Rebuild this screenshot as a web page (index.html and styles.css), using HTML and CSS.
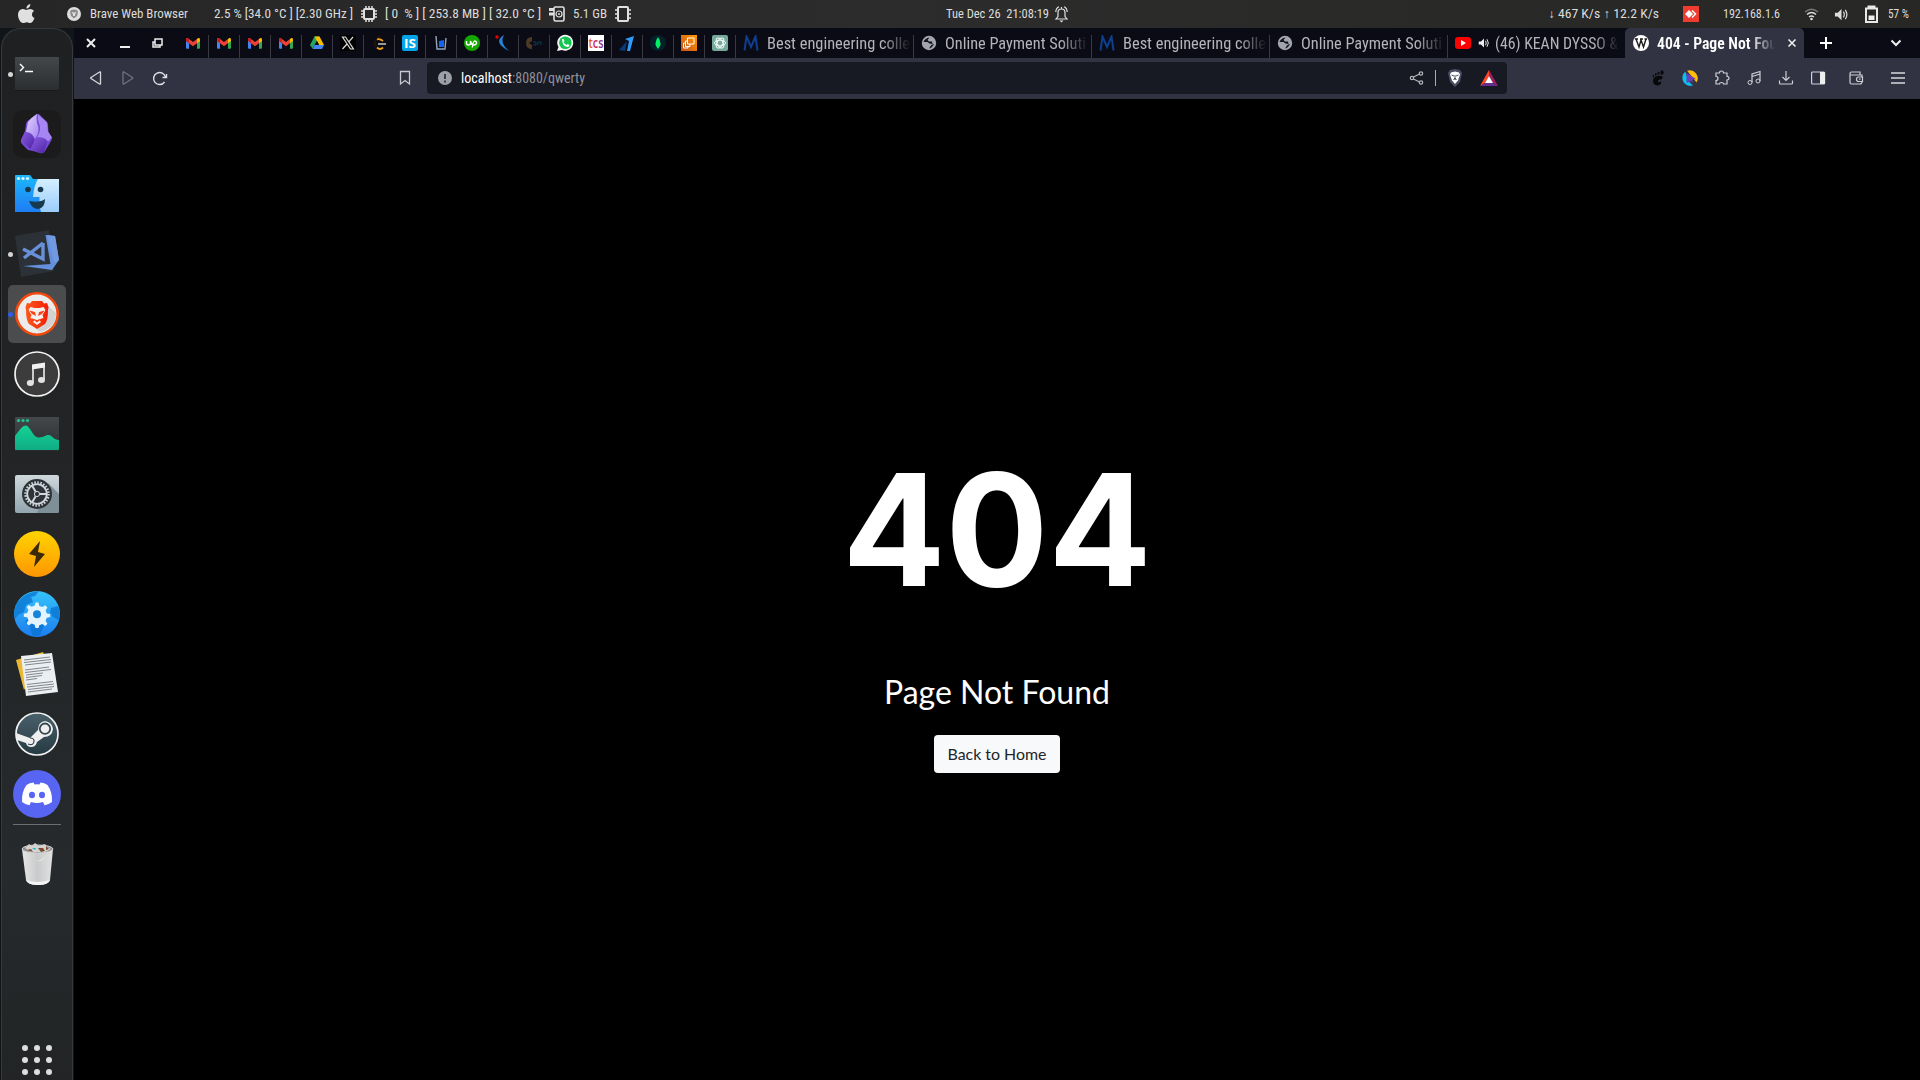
FILE: index.html
```html
<!DOCTYPE html>
<html lang="en">
<head>
<meta charset="utf-8">
<title>404 - Page Not Found</title>
<link rel="stylesheet" href="styles.css">
</head>
<body>
<svg class="defs" width="0" height="0">
  <defs>
    <linearGradient id="gTerm" x2="0" y2="1"><stop stop-color="#44484b"/><stop offset="1" stop-color="#2b2e30"/></linearGradient>
    <linearGradient id="gFold" x2="0" y2="1"><stop stop-color="#1cb8fb"/><stop offset="1" stop-color="#1f7cf4"/></linearGradient>
    <linearGradient id="gFold2" x2="0" y2="1"><stop stop-color="#d4efff"/><stop offset="1" stop-color="#9accfb"/></linearGradient>
    <linearGradient id="gObs" x2="1" y2="1"><stop stop-color="#e4d6ff"/><stop offset="1" stop-color="#a283ee"/></linearGradient>
    <linearGradient id="gObs2" x2="1" y2="1"><stop stop-color="#8c5ee0"/><stop offset="1" stop-color="#4b21a4"/></linearGradient>
    <linearGradient id="gLion" x2="1" y2="0"><stop stop-color="#fb5a1c"/><stop offset="1" stop-color="#f51c05"/></linearGradient>
    <linearGradient id="gMon" x2="0" y2="1"><stop stop-color="#14d295"/><stop offset="1" stop-color="#10ac84"/></linearGradient>
    <linearGradient id="gSet" x2="0" y2="1"><stop stop-color="#cfd8dc"/><stop offset="1" stop-color="#93a5ae"/></linearGradient>
    <linearGradient id="gBolt" x2="0" y2="1"><stop stop-color="#ffd400"/><stop offset="1" stop-color="#ff9603"/></linearGradient>
    <linearGradient id="gGlobe" x2="0" y2="1"><stop stop-color="#35c4fa"/><stop offset="1" stop-color="#1c7df0"/></linearGradient>
    <linearGradient id="gSteam" x2="0" y2="1"><stop stop-color="#4a606b"/><stop offset="1" stop-color="#263a42"/></linearGradient>
    <linearGradient id="gBin" x2="1" y2="0"><stop stop-color="#e6e6e6"/><stop offset=".5" stop-color="#c9cacb"/><stop offset="1" stop-color="#e2e2e2"/></linearGradient>
    <linearGradient id="gAws" x1="0" y1="1" x2="1" y2="0"><stop stop-color="#c8511b"/><stop offset="1" stop-color="#f90"/></linearGradient>
  </defs>
  <symbol id="gmail" viewBox="0 0 16 16"><path d="M1 4.500v8.300q0 1 1 1h2V7.500z" fill="#4285f4"/><path d="M15 4.500v8.300q0 1-1 1h-2V7.500z" fill="#34a853"/><path d="M12 4l1.200-.9Q15 2.400 15 4.500V6l-3 2.300z" fill="#fbbc04"/><path d="M1 4.500q0-2 2-1.300L8 7l4-3v4.300L8 11.300 1 6z" fill="#ea4335"/><path d="M1 4.500V6l3 2.300V4q-3-2.300-3 .5z" fill="#c5221f"/></symbol>
  <symbol id="mesa" viewBox="0 0 16 16"><path d="M1.500 15.500L3.500 1.500 8 12 12.500 1.500 14.500 15.500" fill="none" stroke="#0c3f90" stroke-width="2"/></symbol>
  <symbol id="globe" viewBox="0 0 16 16"><circle cx="8" cy="8" r="7.200" fill="#a2a4ae"/><path d="M2.500 7Q4 3 8.500 2.500L6.500 5 8 6.500h3l.5 2.500-3-.5-2-1.500zM8 13.500q3-.5 5-4.500-2 0-3 1.500z" fill="#12121c"/></symbol>
  <symbol id="chip" viewBox="0 0 16 16"><path d="M5 0v16M8 0v16M11 0v16M0 5h16M0 8h16M0 11h16" stroke="#e0e0e0" stroke-width="1.500"/><rect x="3" y="3" width="10" height="10" rx="1" fill="#282828" stroke="#e0e0e0" stroke-width="2"/></symbol>
  <symbol id="speaker" viewBox="0 0 16 16"><path d="M1 6h3l4-4v12l-4-4H1z" fill="currentColor"/><path d="M10 5q2 3 0 6M12 3q3.500 5 0 10" fill="none" stroke="currentColor" stroke-width="1.300"/></symbol>
</svg>

<header class="topbar">
  <svg width="17" height="20" viewBox="0 0 17 20"><path d="M12 5c2 0 3.500 1 4 2-3 2-2.500 6 .5 7-.8 2.500-2.500 5-4 5-1.600 0-2-.8-3.700-.8S6.500 19 5 19C2.500 19 0 14.500 0 11c0-4 2.500-6 5-6 1.500 0 2.600.9 3.500.9S10.500 5 12 5zM8.500 4.500C8.300 2 10.500.2 12.300 0c.2 2.400-1.800 4.500-3.800 4.500z" fill="#e0e0e0"/></svg>
  <svg width="16" height="16" viewBox="0 0 16 16"><circle cx="8" cy="8" r="7" fill="#dedede"/><path d="M8 3.500l3 .5 1 2-1 4-3 2.500L5 10 4 6l1-2z" fill="#8a8a8a"/><path d="M5.500 6L8 6.500 10.500 6 9 8.500V10H7V8.500z" fill="#ddd"/></svg>
  <svg class="t" width="99" height="28"><text x="0" y="18" textLength="98" lengthAdjust="spacingAndGlyphs">Brave Web Browser</text></svg>
  <svg class="t" width="140" height="28"><text x="0" y="18" textLength="139" lengthAdjust="spacingAndGlyphs">2.5 % [34.0 °C ] [2.30 GHz ]</text></svg>
  <svg width="16" height="16"><use href="#chip"/></svg>
  <svg class="t" width="157" height="28"><text x="0" y="18" textLength="156" lengthAdjust="spacingAndGlyphs">[ 0&#160; % ] [ 253.8 MB ] [ 32.0 °C ]</text></svg>
  <svg width="16" height="16" viewBox="0 0 16 16"><rect x="5" y="1" width="10" height="14" rx="1.500" fill="#282828" stroke="#e0e0e0" stroke-width="1.600"/><path d="M0 2h5v3H0zM0 6.500h5v3H0z" fill="#e0e0e0"/><circle cx="10" cy="8" r="3" fill="none" stroke="#e0e0e0" stroke-width="1.200"/><circle cx="10" cy="8" r="1" fill="#e0e0e0"/></svg>
  <svg class="t" width="35" height="28"><text x="0" y="18" textLength="34" lengthAdjust="spacingAndGlyphs">5.1 GB</text></svg>
  <svg width="16" height="16" viewBox="0 0 16 16"><path d="M0 4h16M0 8h16M0 12h16" stroke="#e0e0e0" stroke-width="1.500"/><rect x="3" y="1" width="10" height="14" rx="1" fill="#282828" stroke="#e0e0e0" stroke-width="2"/></svg>
  <svg class="t" width="104" height="28"><text x="0" y="18" textLength="103" lengthAdjust="spacingAndGlyphs">Tue Dec 26&#160; 21:08:19</text></svg>
  <svg width="13" height="17" viewBox="0 0 13 17"><path d="M1 13h11L10 10.500V6.500Q10 3 6.500 3T3 6.500v4zM.8 6Q1 2 4 .8M12.200 6Q12 2 9 .8M6.500 1v2" fill="none" stroke="#e0e0e0" stroke-width="1.200"/><path d="M4.500 14.500h4l-2 2z" fill="#e0e0e0"/></svg>
  <svg class="t" width="112" height="28"><text x="-1" y="18" textLength="111" lengthAdjust="spacingAndGlyphs">↓ 467 K/s ↑ 12.2 K/s</text></svg>
  <svg width="16" height="16" viewBox="0 0 16 16"><path d="M0 0h16v16H0z" fill="#f03c30"/><path d="M6 4l4 4-4 4-4-4z" fill="#fff"/><path d="M9 4.500L12.500 8 9 11.500" fill="none" stroke="#fff" stroke-width="1.500"/></svg>
  <svg class="t" width="57" height="28"><text x="0" y="18" textLength="57" lengthAdjust="spacingAndGlyphs">192.168.1.6</text></svg>
  <svg width="15" height="14" viewBox="0 0 15 14"><g fill="none" stroke-width="1.400"><path d="M1 5Q7.500-.5 14 5" stroke="#777"/><path d="M3 7.500q4.500-4 9 0M5 10q2.500-2 5 0" stroke="#ddd"/></g><circle cx="7.500" cy="12" r="1.300" fill="#ddd"/></svg>
  <svg class="light" width="15" height="15"><use href="#speaker"/></svg>
  <svg width="15" height="17" viewBox="0 0 15 17"><path d="M4.500 2V.5h6V2M2 2.500h11V16H2z" fill="none" stroke="#e8e8e8" stroke-width="2"/><path d="M4.500 9.500h6v4.500h-6z" fill="#eee"/></svg>
  <svg class="t" width="22" height="28"><text x="0" y="18" textLength="21" lengthAdjust="spacingAndGlyphs">57 %</text></svg>
</header>

<div class="desktop">
  <nav class="dock">
    <div class="app"><i class="run"></i><svg width="48" height="48"><rect x="2" y="8" width="44" height="33" rx="1" fill="#17191a"/><rect x="2" y="7" width="44" height="33" rx="1" fill="url(#gTerm)"/><path d="M7 14l3.500 3.500L7 21M12 21.500h8" fill="none" stroke="#fff" stroke-width="1.400"/></svg></div>
    <div class="app"><svg width="48" height="48"><rect width="48" height="48" rx="10" fill="#1b1b1b"/><path d="M23 4.500q2-1.500 4 .5l7 7q1 1 1 3l.5 7 3 5q1 2-.5 4l-6 10q-1.500 3-5 2l-5-1.500q-3-1-7-1.500l-6-6q-2-2-1-4l4-9 1-7q0-2 2-3.500z" fill="#7749d8"/><path d="M24 4q-5 3-9 8l-2 10q6 0 9 7 6-8 2-16-1-5 0-9z" fill="url(#gObs)"/><path d="M25 4.500q5 4 9 8l1 9 4 6-4 4q-4-5-11-4 5-9 2-14-2-4-1-9z" fill="#a585ef"/><path d="M12.500 22q7 1 9 8l-4 9-9-8q-1-1 0-2z" fill="url(#gObs2)"/><path d="M22 30q8-4 12.500 1.500L31 42q-1.500 1.500-4 1l-9-3.500z" fill="url(#gObs2)"/></svg></div>
    <div class="app"><svg width="48" height="48"><path d="M2 6q0-1 1-1h14l3 4h26v32q0 1-1 1H2z" fill="url(#gFold)"/><path d="M25 9h21v32q0 1-1 1H28q-2-5-1.500-11v-4h-6.500q1-12 5-18z" fill="url(#gFold2)"/><g fill="#d9f6ff"><circle cx="5.500" cy="8.500" r="1.600"/><circle cx="10" cy="8.500" r="1.600"/><circle cx="14.500" cy="8.500" r="1.600"/></g><g fill="#16394e"><circle cx="15" cy="19.500" r="2.800"/><circle cx="27.500" cy="19.500" r="2.800"/><path d="M16 31q11 2 16-2 0 9-7 10-6 0-9-8z"/></g></svg></div>
    <div class="app"><i class="run"></i><svg width="48" height="48"><path d="M2 6L36 0l5 41-33 6z" fill="#2c3137"/><path d="M32.500 5l9.500 1 4 24-7 10-29-4 27.500-2z" fill="#638fdb"/><path d="M34 5l8 1 4 24-5 3z" fill="#7099e0"/><path d="M30 13v16L10 19M30 13L11 28" fill="none" stroke="#6790d8" stroke-width="3.400"/></svg></div>
    <div class="app active"><i class="run blue"></i><svg width="48" height="48"><circle cx="24" cy="24" r="20.700" fill="#ececed" stroke="#f2490c" stroke-width="2.600"/><path d="M34 15l9 8q0 9-5 13-5 5-11 6l-3-3z" fill="#d2d2d3"/><path d="M19 11h10l2 2.500 3-.5 1.500 4-.5 3q0 10-3 14l-8 5-8-5q-3-4-3-14l-.5-3 1.500-4 3 .5z" fill="url(#gLion)"/><path d="M17.500 17l4 1h5l4-1 2 3-3 5 1 3-4.500 1.500 2 2.500-4 3-4-3 2-2.500-4.500-1.500 1-3-3-5z" fill="#f4f1f0"/><path d="M16.500 20.500l5.500 1.500 1 4-4-2zM31.500 20.500L26 22l-1 4 4-2zM19 28.500l5 1.500 5-1.500-5 4z" fill="#f5431a"/></svg></div>
    <div class="app"><svg width="48" height="48"><circle cx="24" cy="24" r="22" fill="#3c3c3d" stroke="#f3f3f3" stroke-width="1.700"/><path d="M19 14.500l13-2v5l-13 2z" fill="#f2f2f2"/><path d="M20 16v17M31 14v15" stroke="#eee" stroke-width="1.600"/><ellipse cx="17.300" cy="33" rx="3.500" ry="2.900" fill="#e2e2e2"/><ellipse cx="28.500" cy="30" rx="3.500" ry="2.900" fill="#e2e2e2"/></svg></div>
    <div class="app"><svg width="48" height="48"><rect x="2" y="7" width="44" height="34" rx="1" fill="url(#gTerm)"/><path d="M2 26C7 20 9 15.500 13 15.500S20 28 26 27.500s7-3 10-2.500 5 5 10 5v9q0 1-1 1H3q-1 0-1-1z" fill="url(#gMon)"/><g fill="#18c98d"><circle cx="5.500" cy="10.500" r="1.600"/><circle cx="10" cy="10.500" r="1.600"/><circle cx="14.500" cy="10.500" r="1.600"/></g></svg></div>
    <div class="app"><svg width="48" height="48"><rect x="2" y="5" width="44" height="38" rx="2" fill="url(#gSet)"/><path d="M35 13l11 11v17q0 2-2 2H24z" fill="#7f8f97"/><circle cx="24" cy="24" r="15" fill="#2d3336"/><circle cx="24" cy="24" r="11.500" fill="none" stroke="#cfd8dc" stroke-width="2.500" stroke-dasharray="1.500 1.510"/><circle cx="24" cy="24" r="9.800" fill="none" stroke="#cfd8dc" stroke-width="1.800"/><path d="M24 24h10M24 24l-5-8.500M24 24l-5 8.500" stroke="#cfd8dc" stroke-width="2"/><circle cx="24" cy="24" r="2.600" fill="#2d3336" stroke="#cfd8dc"/></svg></div>
    <div class="app"><svg width="48" height="48"><circle cx="24" cy="24" r="23" fill="url(#gBolt)"/><path d="M27 11L16 24l7 2-2 11 11-13-7-2z" fill="#3b2a05"/></svg></div>
    <div class="app"><svg width="48" height="48"><circle cx="24" cy="24" r="23" fill="url(#gGlobe)"/><path d="M4 13Q12 2 26 1l-4 5-4 1 2 5-7 3-2 7-6 3-3 4q-2-8 2-16zM16 27h13l3 6-5 12q-5 2-8 0l-2-8-5-5zM38 18l7-2q3 8 1 14l-6-3-3-5z" fill="#0873d0" opacity=".75"/><path d="M22.500 12.500h3l.8 3.400 3 1.200 3-1.800 2.100 2.100-1.800 3 1.200 3 3.400.6v3l-3.400.8-1.200 3 1.800 3-2.100 2.100-3-1.800-3 1.200-.8 2.700h-3l-.8-3.200-3-1.200-3 1.800-2.100-2.100 1.800-3-1.200-3-3.400-.5v-3l3.400-.7 1.200-3-1.800-3 2.100-2.100 3 1.800 3-1.200z" fill="#e3f4ff"/><circle cx="24" cy="24.200" r="4" fill="#1683dd"/></svg></div>
    <div class="app"><svg width="48" height="48"><path d="M3 10l27-8 2 5L11 40z" fill="#e9b935"/><path d="M8 6l31-3 6 39-32 4z" fill="#eceff1"/><path d="M11 10l26-3M11 12.500l27-3M12 15l26-3M12 20l24-3M12 22.500l26-3M13 25l17-2M13 27.500l16-2M13 30l11-1.500M14 34.500l26-3M14 37l27-3M15 39.500l26-3M15 42l24-3" stroke="#747b80" stroke-width=".9"/></svg></div>
    <div class="app"><svg width="48" height="48"><circle cx="24" cy="24" r="21" fill="url(#gSteam)" stroke="#f1f1f1" stroke-width="1.700"/><path d="M3 23l14 5 8-8q0-8 7-9 7 1 8 8-1 8-9 8l-7 5q-1 5-6 5-4 0-5-4l-9-3z" fill="#efefef"/><circle cx="32" cy="18.700" r="5.200" fill="#eee" stroke="#34474f" stroke-width="1.800"/><path d="M15 34q6 2 6-3 0-3-4-3" fill="none" stroke="#34474f" stroke-width="1.200"/></svg></div>
    <div class="app"><svg width="48" height="48"><circle cx="24" cy="24" r="24" fill="#5865f2"/><path d="M13.500 15q3-2 7-2.400l1 2q2.500-.5 5 0l1-2q4 .4 7 2.400 5 7 4.500 17-4 3-7.500 3.300L30 32q-6 2.200-12 0l-1.500 3.300Q13 35 9 32q-.5-10 4.500-17z" fill="#fff"/><ellipse cx="19" cy="25" rx="3" ry="3.300" fill="#5865f2"/><ellipse cx="29" cy="25" rx="3" ry="3.300" fill="#5865f2"/></svg></div>
    <hr class="rule">
    <div class="app"><svg width="48" height="48"><path d="M9 8l4 31q1 5 12 5t12-5l3-31z" fill="url(#gBin)"/><ellipse cx="24.500" cy="8" rx="15.500" ry="4" fill="#8b8b8c" stroke="#d8d8d8"/><path d="M12 7l4-4 3 2 3-3 4 3 6-2 2 3 4 2-6 3-14 0z" fill="#d4d2d0"/><path d="M14 9l4-1 2 3zM25 7l5 0 2 3-4 1zM33 5l3 3-3 1z" fill="#7a4a33"/><path d="M19 7l4 0-1 2z" fill="#23b9c9"/><path d="M22 20q7 0 10-5-1 6-10 5z" fill="#eee"/><path d="M13 39q11 4 24 0-2 5-12 5t-12-5z" fill="#f4f4f4"/></svg></div>
    <svg class="grid" width="30" height="30" fill="#dedede"><circle cx="3" cy="3" r="3"/><circle cx="15" cy="3" r="3"/><circle cx="27" cy="3" r="3"/><circle cx="3" cy="15" r="3"/><circle cx="15" cy="15" r="3"/><circle cx="27" cy="15" r="3"/><circle cx="3" cy="27" r="3"/><circle cx="15" cy="27" r="3"/><circle cx="27" cy="27" r="3"/></svg>
  </nav>

  <section class="browser">
    <div class="tabs">
      <svg class="winctl" width="104" height="30"><path d="M13 11l8 8M21 11l-8 8" stroke="#eee" stroke-width="2"/><path d="M46 19h10" stroke="#eee" stroke-width="2"/><path d="M81 11h7v6h-7zM81 14h-2v5h7v-2" fill="none" stroke="#eee" stroke-width="1.500"/></svg>
      <div class="pin"><svg width="16" height="16"><use href="#gmail"/></svg></div>
      <div class="pin"><svg width="16" height="16"><use href="#gmail"/></svg></div>
      <div class="pin"><svg width="16" height="16"><use href="#gmail"/></svg></div>
      <div class="pin"><svg width="16" height="16"><use href="#gmail"/></svg></div>
      <div class="pin"><svg width="16" height="16"><path d="M5.500 1.500h5l-7 12L1 10z" fill="#26a65b"/><path d="M5.500 1.500h5L15 10h-5z" fill="#fbbc04"/><path d="M5.500 10H15l-2 4H3.500z" fill="#4285f4"/><path d="M8 6l2 4H6z" fill="#0b0b15"/></svg></div>
      <div class="pin"><svg width="16" height="16"><path d="M0 0h16v16H0z" fill="#000"/><path d="M2.500 2h3l8 12h-3zM13 2L9 6.700M7 9l-4.500 5" fill="none" stroke="#ddd" stroke-width="1.200"/></svg></div>
      <div class="pin"><svg width="16" height="16" fill="none" stroke-width="1.800"><path d="M9 1L5 5q-3 4 0 7" stroke="#20160b"/><path d="M6 4.500q3-1 6 1.500M6 12.500q3 3 6 0" stroke="#f0a018"/><path d="M7 9h8" stroke="#aaa"/></svg></div>
      <div class="pin"><svg width="16" height="16"><rect width="16" height="16" rx="2" fill="#03a4e8"/><text x="2" y="13" class="is" textLength="12" lengthAdjust="spacingAndGlyphs">IS</text></svg></div>
      <div class="pin"><svg width="16" height="16"><path d="M3 1l1 13h8l1-11" fill="none" stroke="#93a7be" stroke-width="1.400"/><path d="M6 6l5-1v7H6z" fill="#1165f2"/></svg></div>
      <div class="pin"><svg width="16" height="16"><circle cx="8" cy="8" r="8" fill="#14a800"/><path d="M2.500 6v2q0 2 2 2t2-2V6q1 4 3 4 3 0 3-2.200Q12.500 6 11 6 9 6 8.300 12.500" fill="none" stroke="#fff" stroke-width="1.400"/></svg></div>
      <div class="pin"><svg width="16" height="16"><path d="M9 0Q-3 7 14 16 4 8 9 0z" fill="#2683d4"/><circle cx="2" cy="2" r="1.700" fill="#e00"/></svg></div>
      <div class="pin"><svg width="16" height="16"><path d="M6 2Q0 2 0 8t6 6V10l-3-2 3-2z" fill="#4c3a25"/><path d="M7 7h3v3H7m5-3v3m0-3h3v3" fill="none" stroke="#103c4e"/></svg></div>
      <div class="pin"><svg width="16" height="16"><path d="M0 16l1.500-4A8 8 0 1 1 5 15z" fill="#f5f5f5"/><circle cx="8.300" cy="7.700" r="6.300" fill="#12c550"/><path d="M5 4l1.500 0 1 2-1 1q1 2 3 3l1-1 2 1q0 2-2 2Q5 11 5 4z" fill="#fff"/></svg></div>
      <div class="pin"><svg width="16" height="16"><path d="M0 0h16v16H0z" fill="#fff"/><text x="0.500" y="13" class="tcs" textLength="15" lengthAdjust="spacingAndGlyphs"><tspan fill="#e1601a">t</tspan><tspan fill="#c71f66">c</tspan><tspan fill="#87329b">s</tspan></text></svg></div>
      <div class="pin"><svg width="16" height="16"><path d="M6 4l9-3-4 15H8l2-10z" fill="#319cfb"/><path d="M0 15l8-9-2 10z" fill="#093976"/></svg></div>
      <div class="pin"><svg width="16" height="16"><circle cx="8" cy="8" r="8" fill="#04202b"/><path d="M8 2q-5 7 0 12 5-5 0-12z" fill="#00ed64"/></svg></div>
      <div class="pin"><svg width="16" height="16"><path d="M0 0h16v16H0z" fill="url(#gAws)"/><path d="M6.500 3H13v6H6.500zM9 9v2.500H4.500V6h2M4.500 8H2.500v5H7v-1.500" fill="none" stroke="#fff"/></svg></div>
      <div class="pin"><svg width="16" height="16"><rect width="16" height="16" rx="2" fill="#74aa9c"/><g fill="none" stroke="#f1f7f5"><ellipse cx="8" cy="8" rx="5.500" ry="2.800"/><ellipse cx="8" cy="8" rx="5.500" ry="2.800" transform="rotate(60 8 8)"/><ellipse cx="8" cy="8" rx="5.500" ry="2.800" transform="rotate(120 8 8)"/></g></svg></div>
      <div class="tab"><svg width="16" height="16"><use href="#mesa"/></svg><svg class="t title" width="144" height="30"><text x="0" y="21" textLength="143" lengthAdjust="spacingAndGlyphs">Best engineering colle</text></svg></div>
      <div class="tab"><svg width="16" height="16"><use href="#globe"/></svg><svg class="t title" width="144" height="30"><text x="0" y="21" textLength="141" lengthAdjust="spacingAndGlyphs">Online Payment Soluti</text></svg></div>
      <div class="tab"><svg width="16" height="16"><use href="#mesa"/></svg><svg class="t title" width="144" height="30"><text x="0" y="21" textLength="143" lengthAdjust="spacingAndGlyphs">Best engineering colle</text></svg></div>
      <div class="tab"><svg width="16" height="16"><use href="#globe"/></svg><svg class="t title" width="144" height="30"><text x="0" y="21" textLength="141" lengthAdjust="spacingAndGlyphs">Online Payment Soluti</text></svg></div>
      <div class="tab last"><svg width="16" height="16"><rect y="2" width="16" height="12" rx="3" fill="#f00"/><path d="M6 5l5 3-5 3z" fill="#fff"/></svg><svg class="audio" width="12" height="12"><use href="#speaker"/></svg><svg class="t title" width="124" height="30"><text x="0" y="21" textLength="123" lengthAdjust="spacingAndGlyphs">(46) KEAN DYSSO &amp;</text></svg></div>
      <div class="tab current"><svg width="16" height="16"><circle cx="8" cy="8" r="8" fill="#fff"/><path d="M3 4l3 8 2-7 2.500 7L13 4M2 4h3M7 4h3M11.500 4H14" fill="none" stroke="#1c1c1c" stroke-width="1.400"/></svg><svg class="t title" width="119" height="30"><text x="0" y="21" textLength="120" lengthAdjust="spacingAndGlyphs">404 - Page Not Fou</text></svg><svg class="close" width="8" height="8"><path d="M.5.5l7 7M7.500.5l-7 7" stroke="#eee" stroke-width="1.600"/></svg></div>
      <svg class="plus" width="12" height="12"><path d="M6 0v12M0 6h12" stroke="#fff" stroke-width="2"/></svg>
      <svg class="chev" width="12" height="8"><path d="M1.500 1.500L6 6l4.500-4.500" fill="none" stroke="#eee" stroke-width="2"/></svg>
    </div>

    <div class="toolbar">
      <svg width="16" height="16"><path d="M12.500 2.500v11q0 1-1 .5L3 8.500q-.8-.5 0-1L11.500 2q1-.5 1 .5z" fill="none" stroke="#d8d8dc" stroke-width="1.300"/></svg>
      <svg width="16" height="16"><path d="M4 2.500v11q0 1 1 .5l8.500-5.500q.8-.5 0-1L5 2q-1-.5-1 .5z" fill="none" stroke="#707280" stroke-width="1.300"/></svg>
      <svg width="16" height="16"><path d="M12.500 12A6 6 0 1 1 13.500 7.500M10.500 7.500h4V4" fill="none" stroke="#e0e0e4" stroke-width="1.400"/></svg>
      <svg width="16" height="16"><path d="M3.500 1.500h9v12.500L8 10.500 3.500 14z" fill="none" stroke="#c8c9d0" stroke-width="1.300"/></svg>
      <div class="url">
        <svg width="16" height="16"><circle cx="8" cy="8" r="7" fill="#9c9ea8"/><path d="M8 4v5M8 10.500v2" stroke="#30323c" stroke-width="1.800"/></svg>
        <svg class="t addr" width="126" height="32"><text x="0" y="21" class="host" textLength="51" lengthAdjust="spacingAndGlyphs">localhost</text><text x="51" y="21" textLength="73" lengthAdjust="spacingAndGlyphs">:8080/qwerty</text></svg>
        <svg width="16" height="16" fill="none" stroke="#b4b5bd" stroke-width="1.200"><path d="M4.500 7l6-3M4.500 9l6 3"/><circle cx="3" cy="8" r="1.700"/><circle cx="12" cy="3.500" r="1.700"/><circle cx="12" cy="12.500" r="1.700"/></svg>
        <i class="bar"></i>
        <svg width="16" height="18"><path d="M8 0l5 1 2 3-2 9-5 5-5-5-2-9 2-3z" fill="#4b4e63"/><path d="M8 2.500l4 1 1 2-2 6-3 3.500L5 11.500l-2-6 1-2z" fill="#fff"/><path d="M4.500 6l2.500 1M11.500 6L9 7M6.500 10.500L8 9l1.500 1.500M8 6v3" stroke="#4b4e63"/></svg>
        <svg width="18" height="18"><path d="M9 1L0 17l5-3 4-7z" fill="#ff4724"/><path d="M9 1l9 16-5-3-4-7z" fill="#9e1f63"/><path d="M0 17h18l-5-3H5z" fill="#662d91"/><path d="M9 7l4 7H5z" fill="#fff"/></svg>
      </div>
      <svg width="16" height="16" fill="#080808"><path d="M7.500 6q5.500-1 5 2-.5 2-3 1.500-2 .5-1.500 2 1 1 2.500 0 1.500.5.500 2-1 2-3.500 2-4.500-.5-4.500-4.500 0-4 4.500-5z"/><ellipse cx="12" cy="2.500" rx="1.600" ry="2.300"/><ellipse cx="8.500" cy="3.300" rx="1" ry="1.500"/><ellipse cx="5.800" cy="4.500" rx=".9" ry="1.300"/><ellipse cx="3.500" cy="6.200" rx=".8" ry="1.100"/></svg>
      <svg width="16" height="16"><path d="M5 .8A8 8 0 0 1 14.500 12.500L11 8z" fill="#ffbc0a"/><path d="M3.500 1.500A8 8 0 0 0 11 15.400L6 11z" fill="#05c3ef"/><path d="M4.500 3l9.500 6-4 .8 1 3-2.500-1.500L4.500 13z" fill="#6b3fb8"/></svg>
      <svg width="16" height="16"><path d="M2 3h3.500q0-2 2-2t2 2H13v3.500q2 0 2 1.700t-2 1.800V14H9.500q0-1.500-2-1.500t-2 1.500H2v-3.500q2 0 2-2t-2-2z" fill="none" stroke="#cfd0d6" stroke-width="1.200"/></svg>
      <svg width="16" height="16"><path d="M6 12.500V4l8-2.500v9.500M6 6.500L14 4" fill="none" stroke="#cfd0d6" stroke-width="1.200"/><circle cx="4" cy="12.500" r="2" fill="none" stroke="#cfd0d6"/><circle cx="12" cy="11" r="2" fill="none" stroke="#cfd0d6"/></svg>
      <svg width="16" height="16"><path d="M8 1v9M4.500 7L8 10.500 11.500 7M1.500 10.500V13q0 1 1 1h11q1 0 1-1v-2.500" fill="none" stroke="#cfd0d6" stroke-width="1.200"/></svg>
      <svg width="16" height="16"><rect x="1.600" y="2" width="13" height="12" rx="1" fill="none" stroke="#cfd0d6" stroke-width="1.200"/><path d="M10 2h5v12h-5z" fill="#eee"/></svg>
      <svg width="16" height="16" fill="none" stroke="#cfd0d6" stroke-width="1.200"><path d="M14 7V5H2V3.500Q2 2 3.500 2H12v3M2 5v7.500Q2 14 3.500 14H12q2 0 2-2.500"/><path d="M14.500 7H10.500Q8.500 7 8.500 9.200t2 2.300h4zM11 9.200h1.500"/></svg>
      <svg width="16" height="16"><path d="M1 3h14M1 8h14M1 13h14" stroke="#d8d9dd" stroke-width="1.400"/></svg>
    </div>

    <main class="page">
      <h1><svg class="code" width="300" height="192"><text x="-4.500" y="139" textLength="309" lengthAdjust="spacingAndGlyphs">404</text></svg></h1>
      <p><svg class="msg" width="226" height="38"><text x="0" y="28.500" textLength="226" lengthAdjust="spacingAndGlyphs">Page Not Found</text></svg></p>
      <a class="home"><svg width="98" height="38"><text x="-.5" y="25" textLength="99" lengthAdjust="spacingAndGlyphs">Back to Home</text></svg></a>
    </main>
  </section>
</div>
</body>
</html>
```
FILE: styles.css
```css
* { box-sizing: border-box; }
body {
  margin: 0;
  width: 1920px;
  height: 1080px;
  overflow: hidden;
  background: #10151a;
  font-family: "Roboto Condensed", Roboto, sans-serif;
}
svg { display: block; overflow: visible; flex: none; }
.defs { position: absolute; }
.t text { font-family: "Roboto Condensed", Roboto, sans-serif; font-stretch: 75%; }

.topbar {
  height: 28px;
  padding-left: 18px;
  display: grid;
  grid-template-columns: 48px 24px 124px 147px 24px 164px 24px 42px 331px 109px 494px 134px 40px 81px 30px 30px 24px 1fr;
  align-items: center;
  background: linear-gradient(90deg, #262626, #2c2c2c 45%, #272725);
}
.topbar .t text { font-size: 12px; fill: #dcdcdc; }
.light { color: #ddd; }

.desktop { display: flex; height: 1052px; }
.dock {
  width: 72px;
  margin: 0 1px;
  padding-top: 16px;
  display: flex;
  flex-direction: column;
  align-items: center;
  border: solid #36393b;
  border-width: 0 1px 0 1px;
  box-shadow: inset 0 1px #36393b;
  border-radius: 20px 20px 0 0;
  background: linear-gradient(#1f2021, #232526 50%, #262a2c 80%, #222425);
}
.app {
  position: relative;
  flex: none;
  width: 58px;
  height: 58px;
  margin: 1px 0;
  display: flex;
  align-items: center;
  justify-content: center;
  border-radius: 5px;
}
.app.active { background: #4b4c4d; }
.run {
  position: absolute;
  left: 0;
  top: 27px;
  width: 5px;
  height: 5px;
  border-radius: 50%;
  background: #d4d4d4;
}
.run.blue { background: #2d5bea; }
.rule { flex: none; width: 48px; height: 1px; margin: 0 0 10px; border: 0; background: #6c6e6f; }
.grid { margin: auto 0 5px; }

.browser { width: 1846px; display: flex; flex-direction: column; background: #000; }
.tabs { height: 30px; display: flex; align-items: center; background: #0b0b16; }
.pin {
  width: 31px;
  height: 23px;
  margin-top: 7px;
  padding: 0 0 7px 7px;
  border-right: 1px solid #393942;
}
.tab {
  width: 178px;
  height: 23px;
  margin-top: 7px;
  padding: 0 0 7px 7px;
  display: flex;
  align-items: center;
  border-right: 1px solid #393942;
}
.tab.last { width: 177px; border-right: 0; }
.tab.current {
  width: 179px;
  height: 30px;
  margin: 0;
  padding: 0 0 0 8px;
  border: 0;
  border-radius: 5px 5px 0 0;
  background: #313342;
}
.title { margin-left: 8px; overflow: hidden; -webkit-mask-image: linear-gradient(90deg, #000 80%, transparent); mask-image: linear-gradient(90deg, #000 80%, transparent); }
.title text { font-size: 16px; fill: #b4b5ba; }
.current .title { -webkit-mask-image: linear-gradient(90deg, #000 78%, transparent 99%); mask-image: linear-gradient(90deg, #000 78%, transparent 99%); }
.current .title text { font-weight: 600; fill: #fff; }
.audio { margin-left: 7px; color: #eee; }
.audio + .title { margin-left: 5px; }
.close { margin-left: 12px; }
.plus { margin-left: 16px; }
.chev { margin-left: 58px; }
.is { font: 700 13px "Open Sans", sans-serif; fill: #fff; }
.tcs { font: 600 15px "Open Sans", sans-serif; }

.toolbar {
  height: 41px;
  padding: 0 0 1px 14px;
  display: grid;
  grid-template-columns: 31px 33px 245px 30px 1223px 32px 32px 32px 32px 32px 38px 42px 1fr;
  align-items: center;
  background: #313342;
}
.url {
  width: 1080px;
  height: 32px;
  padding-left: 10px;
  display: grid;
  grid-template-columns: 24px 948px 26px 12px 33px 1fr;
  align-items: center;
  border-radius: 4px;
  background: #181a23;
}
.addr text { font-size: 14px; fill: #8f919b; }
.addr .host { fill: #fff; }
.bar { width: 1px; height: 16px; background: #aaabb0; }

.page { flex: 1; display: flex; flex-direction: column; align-items: center; padding-top: 348px; }
h1, p { margin: 0; font-weight: 400; }
.code text { font: 700 156px Inter, sans-serif; fill: #fff; }
p { margin-top: 36px; }
.msg text { font: 400 32px Lato, sans-serif; fill: #fff; }
.home {
  width: 126px;
  height: 38px;
  margin-top: 22px;
  padding-left: 14px;
  border-radius: 4px;
  background: #f8f9fa;
}
.home text { font: 400 16px Lato, sans-serif; fill: #212529; }
```
